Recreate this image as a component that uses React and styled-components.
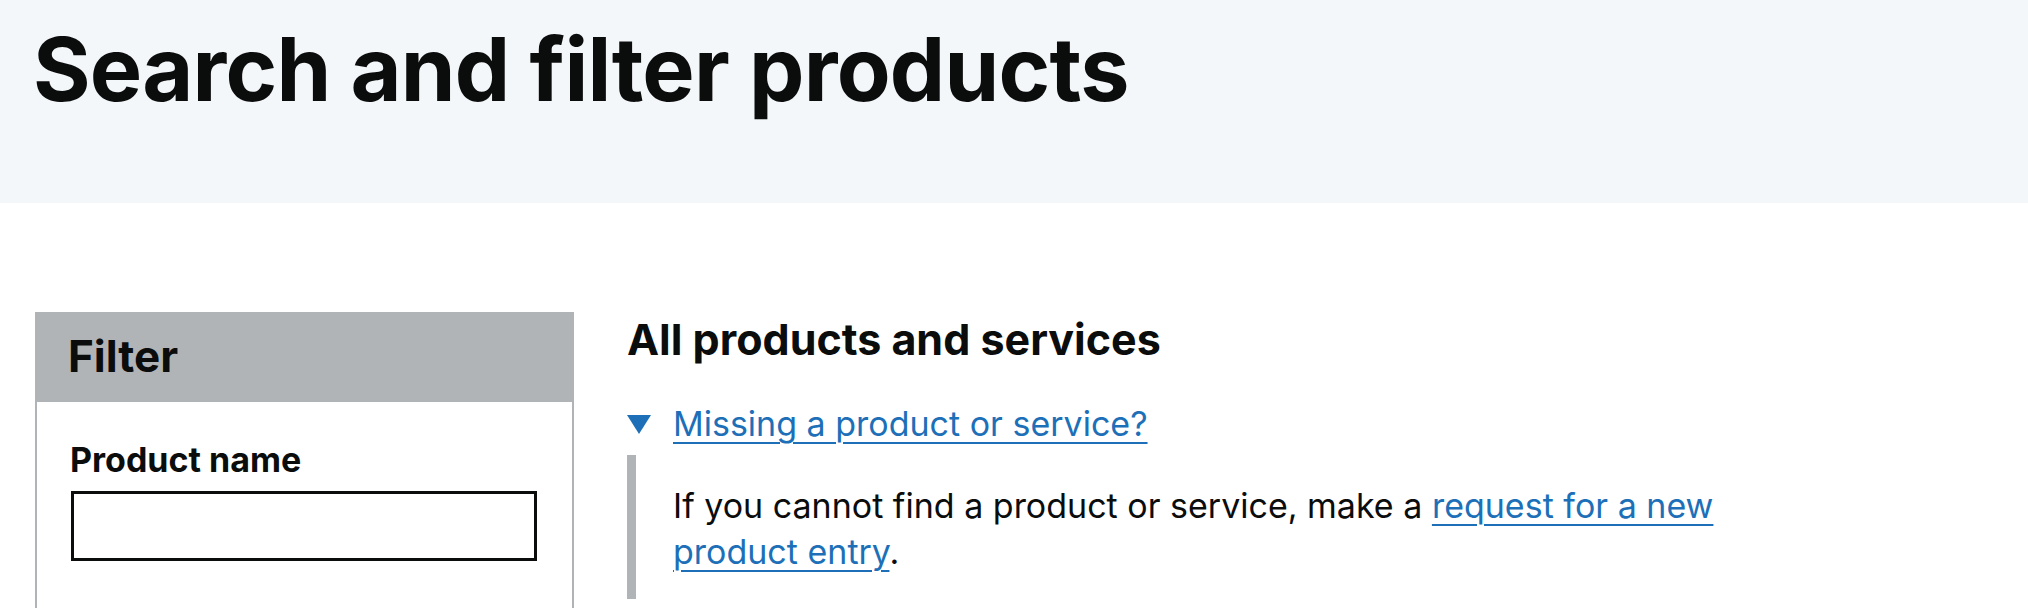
import styled, { createGlobalStyle } from "styled-components";

const GlobalStyle = createGlobalStyle`
  * { box-sizing: border-box; }
  body {
    margin: 0;
    background: #ffffff;
    color: #0b0c0c;
    font-family: "Inter", "Liberation Sans", sans-serif;
  }
`;

const Masthead = styled.header`
  background: #f4f7fa;
  padding: 23px 33px 88px;
`;

const PageTitle = styled.h1`
  margin: 0;
  font-size: 88px;
  line-height: 92px;
  font-weight: 700;
  letter-spacing: -0.8px;
`;

const Main = styled.main`
  display: flex;
  align-items: flex-start;
  gap: 53px;
  padding: 109px 35px 0;
`;

const FilterPanel = styled.aside`
  flex: 0 0 539px;
  border: 2px solid #b1b4b6;
  border-top: 0;
  min-height: 400px;
`;

const PanelHeader = styled.div`
  background: #b1b4b6;
  margin: 0 -2px;
  padding: 17px 33px 18px;
`;

const PanelTitle = styled.h2`
  margin: 0;
  font-size: 44px;
  line-height: 55px;
  font-weight: 700;
`;

const PanelBody = styled.div`
  padding: 35px 33px;
`;

const Label = styled.label`
  display: block;
  font-size: 34px;
  line-height: 46px;
  font-weight: 700;
  margin-bottom: 8px;
`;

const TextInput = styled.input`
  display: block;
  width: 466px;
  height: 70px;
  margin-left: 1px;
  border: 3px solid #0b0c0c;
  border-radius: 0;
  padding: 8px;
  font: inherit;
  font-size: 34px;
`;

const Results = styled.section`
  flex: 0 0 1150px;
`;

const SectionTitle = styled.h2`
  margin: 0 0 34px;
  font-size: 43px;
  line-height: 55px;
  font-weight: 700;
`;

const Details = styled.details`
  font-size: 34px;
  line-height: 46px;
`;

const Summary = styled.summary`
  display: flex;
  align-items: center;
  gap: 22px;
  list-style: none;
  cursor: pointer;
  margin-bottom: 8px;
  &::-webkit-details-marker { display: none; }
`;

const Arrow = styled.svg`
  flex: 0 0 auto;
  width: 24px;
  height: 19px;
`;

const Link = styled.a`
  color: #1d70b8;
  text-decoration: underline;
  text-decoration-thickness: 2px;
  text-underline-offset: 6px;
`;

const DetailsText = styled.div`
  border-left: 9px solid #b1b4b6;
  padding: 28px 28px 24px 37px;
`;

const Paragraph = styled.p`
  margin: 0;
`;

export default function App() {
  return (
    <>
      <GlobalStyle />
      <Masthead>
        <PageTitle>Search and filter products</PageTitle>
      </Masthead>
      <Main>
        <FilterPanel>
          <PanelHeader>
            <PanelTitle>Filter</PanelTitle>
          </PanelHeader>
          <PanelBody>
            <Label htmlFor="product-name">Product name</Label>
            <TextInput id="product-name" type="text" />
          </PanelBody>
        </FilterPanel>
        <Results>
          <SectionTitle>All products and services</SectionTitle>
          <Details open>
            <Summary>
              <Arrow viewBox="0 0 24 19" aria-hidden="true">
                <polygon points="0,0 24,0 12,19" fill="#1d70b8" />
              </Arrow>
              <Link href="#">Missing a product or service?</Link>
            </Summary>
            <DetailsText>
              <Paragraph>
                If you cannot find a product or service, make a{" "}
                <Link href="#">request for a new product entry</Link>.
              </Paragraph>
            </DetailsText>
          </Details>
        </Results>
      </Main>
    </>
  );
}
